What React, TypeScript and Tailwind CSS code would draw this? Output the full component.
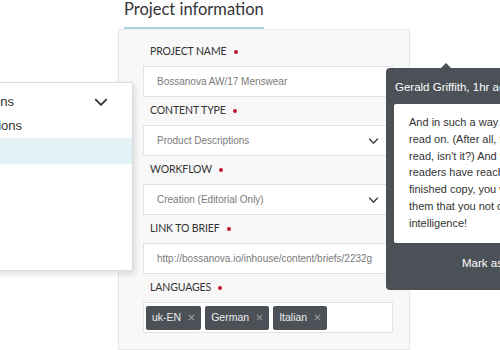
import React from "react";

const sans = "font-['Lato','Noto_Sans',sans-serif]";
const helv = "font-['Liberation_Sans',Arial,sans-serif]";

function Chevron({ className = "" }: { className?: string }) {
  return (
    <svg viewBox="0 0 12 7" className={className} fill="none" stroke="#333" strokeWidth="1.6">
      <path d="M1 1l5 5 5-5" />
    </svg>
  );
}

function Label({ text }: { text: string }) {
  return (
    <div className={`flex h-[28px] items-center gap-[7px] pl-[7px] text-[10.5px] uppercase tracking-[-0.1px] text-[#333] ${sans}`}>
      <span>{text}</span>
      <span className="h-[4px] w-[4px] rounded-full bg-[#bf1630]" />
    </div>
  );
}

function Field({ value, select = false }: { value: string; select?: boolean }) {
  return (
    <div className={`flex h-[31px] w-[250px] items-center justify-between border border-[#e3e3e3] bg-white pl-[13px] pr-[13px] text-[10px] text-[#7a7a7a] ${helv}`}>
      <span className="whitespace-nowrap">{value}</span>
      {select && <Chevron className="h-[6px] w-[11px]" />}
    </div>
  );
}

function Tag({ label }: { label: string }) {
  return (
    <div className={`flex h-[24px] items-center gap-[7px] rounded-[2px] bg-[#4b5157] pl-[6px] pr-[6px] text-[10.5px] text-[#eee] ${helv}`}>
      <span>{label}</span>
      <svg viewBox="0 0 8 8" className="h-[7px] w-[7px]" fill="none" stroke="#9a9fa3" strokeWidth="1.2">
        <path d="M1 1l6 6M7 1L1 7" />
      </svg>
    </div>
  );
}

export default function App() {
  const note = [
    "And in such a way that",
    "read on. (After all, the",
    "read, isn't it?) And when",
    "readers have reached the",
    "finished copy, you will",
    "them that you not only",
    "intelligence!",
  ];

  return (
    <div className="relative h-[350px] w-[500px] overflow-hidden bg-white">
      <div className="ml-[118px] w-[292px]">
        <div className="pl-[6px]">
          <div className={`-mt-[2px] w-fit border-b-2 border-[#a9d6df] pb-[7px] text-[16.5px] leading-[22px] text-[#333] ${sans}`}>
            Project information
          </div>
        </div>
        <div className="border border-[#e8e8e8] bg-[#f8f8f8] px-[24px] pt-[8px] pb-[16px]">
          <Label text="Project name" />
          <Field value="Bossanova AW/17 Menswear" />
          <Label text="Content type" />
          <Field value="Product Descriptions" select />
          <Label text="Workflow" />
          <Field value="Creation (Editorial Only)" select />
          <Label text="Link to brief" />
          <Field value="http://bossanova.io/inhouse/content/briefs/2232g" />
          <Label text="Languages" />
          <div className="flex h-[31px] w-[250px] items-center gap-[4px] border border-[#e3e3e3] bg-white pl-[2px]">
            <Tag label="uk-EN" />
            <Tag label="German" />
            <Tag label="Italian" />
          </div>
        </div>
      </div>

      <div className={`absolute left-[-10px] top-[82px] h-[189px] w-[143px] border border-[#dcdcdc] bg-white pt-[7px] shadow-[2px_3px_6px_rgba(0,0,0,0.12)] text-[13px] text-[#333] ${helv}`}>
        <div className="flex h-[24px] items-center">
          <div className="flex w-[23px] justify-end whitespace-nowrap">Product Descriptions</div>
          <Chevron className="ml-[80px] h-[8px] w-[14px]" />
        </div>
        <div className="flex h-[24px] items-center">
          <div className="flex w-[31px] justify-end whitespace-nowrap">Category Descriptions</div>
        </div>
        <div className="h-[26px] bg-[#e2f2f5]" />
      </div>

      <div className={`absolute left-[386px] top-[68px] h-[222px] w-[140px] rounded-[4px] bg-[#4b5157] ${helv}`}>
        <div className="absolute left-[55px] top-[-5px] h-0 w-0 border-x-[5px] border-b-[5px] border-x-transparent border-b-[#4b5157]" />
        <div className="flex h-[36px] items-center whitespace-nowrap pl-[9px] pt-[4px] text-[11.5px] text-white">
          Gerald Griffith, 1hr ago
        </div>
        <div className="ml-[8px] h-[139px] rounded-[2px] bg-white pl-[15px] pt-[10px] text-[11px] leading-[16.8px] text-[#333]">
          {note.map((line) => (
            <div key={line} className="whitespace-nowrap">{line}</div>
          ))}
        </div>
        <div className="flex h-[42px] items-center whitespace-nowrap pl-[76px] text-[11.5px] text-white">
          Mark as resolved
        </div>
      </div>
    </div>
  );
}
